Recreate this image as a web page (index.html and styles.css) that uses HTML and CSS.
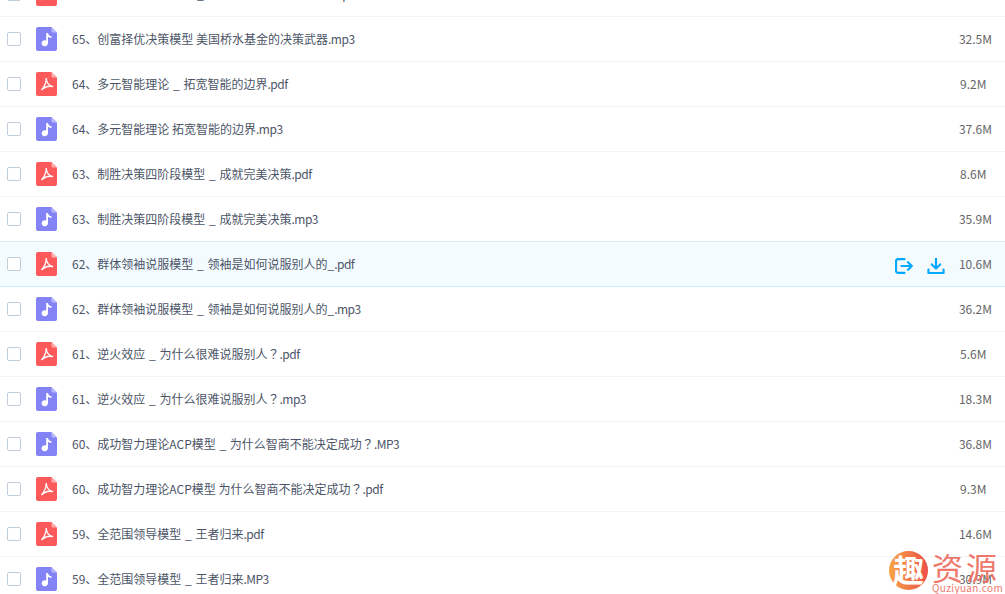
FILE: index.html
```html
<!DOCTYPE html>
<html lang="zh-CN">
<head>
<meta charset="utf-8">
<title>文件列表</title>
<link rel="stylesheet" href="styles.css">
</head>
<body>
<svg class="defs" width="0" height="0" aria-hidden="true">
  <symbol id="pdf" viewBox="0 0 21 24">
    <path d="M2 0H15.500L21 5.500V22a2 2 0 0 1-2 2H2a2 2 0 0 1-2-2V2a2 2 0 0 1 2-2z" fill="#fc5a5a"/>
    <path d="M15.500 0L21 5.500H17a1.500 1.500 0 0 1-1.500-1.500z" fill="#fdaeae"/>
    <path d="M10.200 6C10.400 10 8.500 14.500 5.500 18M10.200 6C10.500 11 12.500 13.500 16.500 14.500C13 13.800 9 14.500 5.500 18" fill="none" stroke="#fff" stroke-width="1.300" stroke-linejoin="round"/>
  </symbol>
  <symbol id="mus" viewBox="0 0 21 24">
    <path d="M2 0H15.500L21 5.500V22a2 2 0 0 1-2 2H2a2 2 0 0 1-2-2V2a2 2 0 0 1 2-2z" fill="#8383f5"/>
    <path d="M15.500 0L21 5.500H17a1.500 1.500 0 0 1-1.500-1.500z" fill="#b9b9fa"/>
    <path d="M10.200 6H12C12.200 8 13.500 9 15.500 9.200V11C14 11 12.800 10.500 12 9.800V16A3.200 3 0 1 1 10.200 13.500z" fill="#fff"/>
  </symbol>
</svg>
<ul class="list">
  <li class="row"><span class="check"></span><svg class="ficon"><use href="#pdf"/></svg><span class="name">65、创富择优决策模型 <span class="u">_</span> 美国桥水基金的决策武器<span class="ext">.pdf</span></span><span class="size">9.8M</span></li>
  <li class="row"><span class="check"></span><svg class="ficon"><use href="#mus"/></svg><span class="name">65、创富择优决策模型 美国桥水基金的决策武器<span class="ext">.mp3</span></span><span class="size">32.5M</span></li>
  <li class="row"><span class="check"></span><svg class="ficon"><use href="#pdf"/></svg><span class="name">64、多元智能理论 <span class="u">_</span> 拓宽智能的边界<span class="ext">.pdf</span></span><span class="size">9.2M</span></li>
  <li class="row"><span class="check"></span><svg class="ficon"><use href="#mus"/></svg><span class="name">64、多元智能理论 拓宽智能的边界<span class="ext">.mp3</span></span><span class="size">37.6M</span></li>
  <li class="row"><span class="check"></span><svg class="ficon"><use href="#pdf"/></svg><span class="name">63、制胜决策四阶段模型 <span class="u">_</span> 成就完美决策<span class="ext">.pdf</span></span><span class="size">8.6M</span></li>
  <li class="row"><span class="check"></span><svg class="ficon"><use href="#mus"/></svg><span class="name">63、制胜决策四阶段模型 <span class="u">_</span> 成就完美决策<span class="ext">.mp3</span></span><span class="size">35.9M</span></li>
  <li class="row active"><span class="check"></span><svg class="ficon"><use href="#pdf"/></svg><span class="name">62、群体领袖说服模型 <span class="u">_</span> 领袖是如何说服别人的_<span class="ext">.pdf</span></span>
    <span class="actions">
      <svg class="act" viewBox="0 0 18 16"><path d="M9.500 1.200H3a2 2 0 0 0-2 2v9.600a2 2 0 0 0 2 2H9.500M6.500 8H16.500M13 4.200L16.800 8 13 11.800" fill="none" stroke="#06a7ff" stroke-width="2.200" stroke-linecap="round" stroke-linejoin="round"/></svg>
      <svg class="act" viewBox="0 0 18 16"><path d="M9 .5V10M4.800 6.500L9 10.500 13.200 6.500M1.500 11.500V15H16.500V11.500" fill="none" stroke="#06a7ff" stroke-width="2.200" stroke-linecap="round" stroke-linejoin="round"/></svg>
    </span>
    <span class="size">10.6M</span></li>
  <li class="row"><span class="check"></span><svg class="ficon"><use href="#mus"/></svg><span class="name">62、群体领袖说服模型 <span class="u">_</span> 领袖是如何说服别人的_<span class="ext">.mp3</span></span><span class="size">36.2M</span></li>
  <li class="row"><span class="check"></span><svg class="ficon"><use href="#pdf"/></svg><span class="name">61、逆火效应 <span class="u">_</span> 为什么很难说服别人<span class="q" lang="zh-TW">？</span><span class="ext">.pdf</span></span><span class="size">5.6M</span></li>
  <li class="row"><span class="check"></span><svg class="ficon"><use href="#mus"/></svg><span class="name">61、逆火效应 <span class="u">_</span> 为什么很难说服别人<span class="q" lang="zh-TW">？</span><span class="ext">.mp3</span></span><span class="size">18.3M</span></li>
  <li class="row"><span class="check"></span><svg class="ficon"><use href="#mus"/></svg><span class="name">60、成功智力理论ACP模型 <span class="u">_</span> 为什么智商不能决定成功<span class="q" lang="zh-TW">？</span><span class="ext">.MP3</span></span><span class="size">36.8M</span></li>
  <li class="row"><span class="check"></span><svg class="ficon"><use href="#pdf"/></svg><span class="name">60、成功智力理论ACP模型 为什么智商不能决定成功<span class="q" lang="zh-TW">？</span><span class="ext">.pdf</span></span><span class="size">9.3M</span></li>
  <li class="row"><span class="check"></span><svg class="ficon"><use href="#pdf"/></svg><span class="name">59、全范围领导模型 <span class="u">_</span> 王者归来<span class="ext">.pdf</span></span><span class="size">14.6M</span></li>
  <li class="row"><span class="check"></span><svg class="ficon"><use href="#mus"/></svg><span class="name">59、全范围领导模型 <span class="u">_</span> 王者归来<span class="ext">.MP3</span></span><span class="size">30.9M</span></li>
</ul>
<div class="mark">
  <span class="mark-logo">趣</span>
  <div class="mark-text">
    <span class="mark-cn">资源</span>
    <span class="mark-en">Quziyuan.com</span>
  </div>
</div>
</body>
</html>
```
FILE: styles.css
```css
html, body {
  margin: 0;
  height: 594px;
  overflow: hidden;
  background: #fff;
  font-family: "Noto Sans CJK SC", "Noto Sans", sans-serif;
}
.defs { position: absolute; }
.list {
  list-style: none;
  margin: -28px 0 0;
  padding: 0;
}
.row {
  box-sizing: border-box;
  height: 45px;
  display: flex;
  align-items: center;
  padding-left: 7px;
  padding-right: 13px;
  border-bottom: 1px solid #f1f5fb;
}
.row.active {
  background: #f4fbff;
  border-bottom-color: #cdeeff;
  box-shadow: 0 -1px 0 #dcecf8;
}
.check {
  box-sizing: border-box;
  width: 14px;
  height: 14px;
  border: 1px solid #c2cddb;
  border-radius: 2px;
  background: #fff;
  flex: none;
  margin-top: -1px;
}
.ficon {
  width: 21px;
  height: 24px;
  margin-left: 15px;
  flex: none;
}
.name {
  margin-left: 15px;
  margin-bottom: 2px;
  flex: 1;
  font-size: 12px;
  color: #4c5567;
  white-space: nowrap;
}
.u { padding: 0 1px; }
.ext { letter-spacing: -.5px; }
.q { font-family: "Noto Sans CJK TC", sans-serif; }
.actions {
  display: flex;
  gap: 14px;
  margin-right: 14px;
  margin-top: 3px;
}
.act {
  width: 18px;
  height: 16px;
}
.size {
  font-size: 12px;
  color: #666;
  white-space: nowrap;
  min-width: 32px;
  margin-bottom: 2px;
}
.mark {
  position: absolute;
  left: 889px;
  top: 551px;
  display: flex;
  gap: 4px;
}
.mark-logo {
  width: 39px;
  height: 39px;
  border-radius: 50%;
  background: linear-gradient(90deg, #f7a545, #ec5048);
  color: #fff;
  font-size: 31px;
  font-weight: 700;
  line-height: 36px;
  text-align: center;
}
.mark-text {
  display: flex;
  flex-direction: column;
  color: #ee6a5c;
  opacity: .9;
}
.mark-cn {
  font-size: 31px;
  line-height: 31px;
  letter-spacing: 3px;
  white-space: nowrap;
}
.mark-en {
  font-size: 10px;
  line-height: 11px;
  letter-spacing: .35px;
  white-space: nowrap;
}
```
